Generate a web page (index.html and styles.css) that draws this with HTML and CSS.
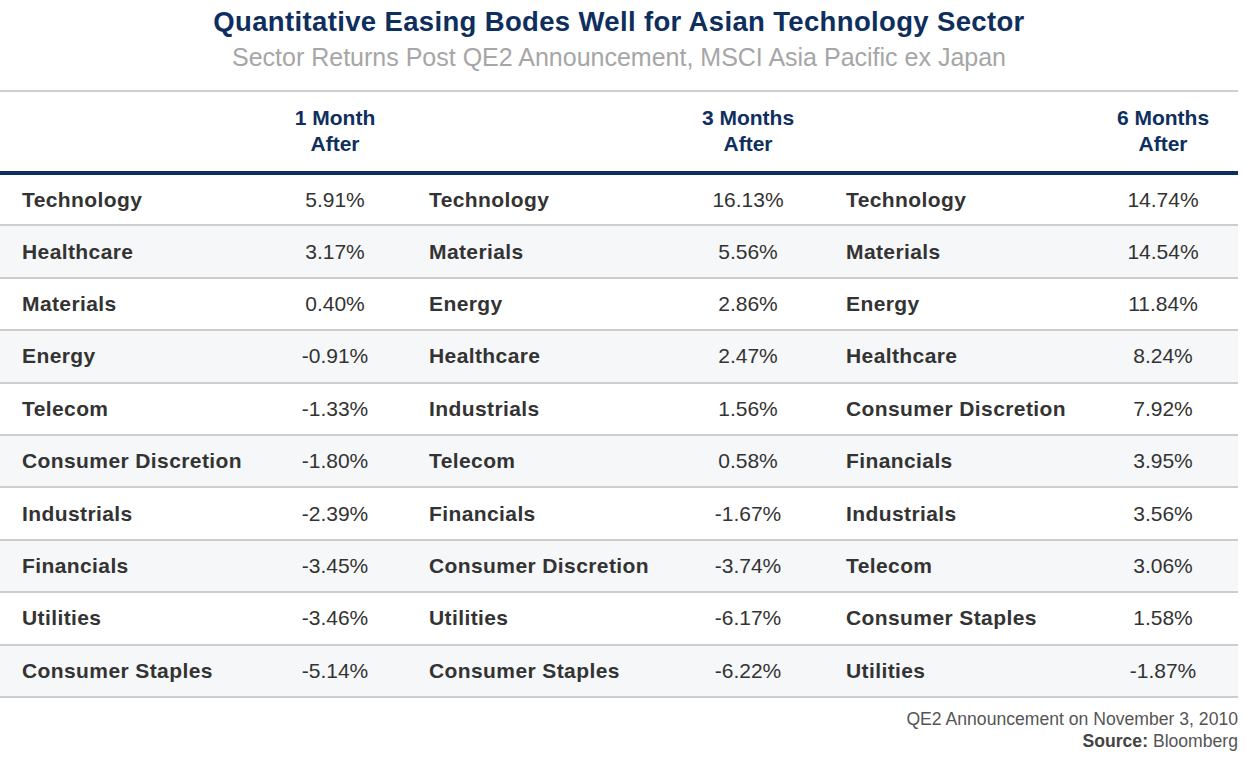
FILE: index.html
```html
<!DOCTYPE html>
<html>
<head>
<meta charset="utf-8">
<link rel="stylesheet" href="styles.css">
</head>
<body>
<div class="page">
  <header class="titles">
    <h1 class="title">Quantitative Easing Bodes Well for Asian Technology Sector</h1>
    <p class="subtitle">Sector Returns Post QE2 Announcement, MSCI Asia Pacific ex Japan</p>
  </header>
  <table class="returns">
    <colgroup>
      <col class="c-l1"><col class="c-v1"><col class="c-l2"><col class="c-v2"><col class="c-l3"><col class="c-v3">
    </colgroup>
    <thead>
      <tr>
        <th></th><th class="val">1 Month<br>After</th>
        <th></th><th class="val">3 Months<br>After</th>
        <th></th><th class="val">6 Months<br>After</th>
      </tr>
    </thead>
    <tbody>
      <tr><td class="lab">Technology</td><td class="val">5.91%</td><td class="lab">Technology</td><td class="val">16.13%</td><td class="lab">Technology</td><td class="val">14.74%</td></tr>
      <tr><td class="lab">Healthcare</td><td class="val">3.17%</td><td class="lab">Materials</td><td class="val">5.56%</td><td class="lab">Materials</td><td class="val">14.54%</td></tr>
      <tr><td class="lab">Materials</td><td class="val">0.40%</td><td class="lab">Energy</td><td class="val">2.86%</td><td class="lab">Energy</td><td class="val">11.84%</td></tr>
      <tr><td class="lab">Energy</td><td class="val">-0.91%</td><td class="lab">Healthcare</td><td class="val">2.47%</td><td class="lab">Healthcare</td><td class="val">8.24%</td></tr>
      <tr><td class="lab">Telecom</td><td class="val">-1.33%</td><td class="lab">Industrials</td><td class="val">1.56%</td><td class="lab">Consumer Discretion</td><td class="val">7.92%</td></tr>
      <tr><td class="lab">Consumer Discretion</td><td class="val">-1.80%</td><td class="lab">Telecom</td><td class="val">0.58%</td><td class="lab">Financials</td><td class="val">3.95%</td></tr>
      <tr><td class="lab">Industrials</td><td class="val">-2.39%</td><td class="lab">Financials</td><td class="val">-1.67%</td><td class="lab">Industrials</td><td class="val">3.56%</td></tr>
      <tr><td class="lab">Financials</td><td class="val">-3.45%</td><td class="lab">Consumer Discretion</td><td class="val">-3.74%</td><td class="lab">Telecom</td><td class="val">3.06%</td></tr>
      <tr><td class="lab">Utilities</td><td class="val">-3.46%</td><td class="lab">Utilities</td><td class="val">-6.17%</td><td class="lab">Consumer Staples</td><td class="val">1.58%</td></tr>
      <tr><td class="lab">Consumer Staples</td><td class="val">-5.14%</td><td class="lab">Consumer Staples</td><td class="val">-6.22%</td><td class="lab">Utilities</td><td class="val">-1.87%</td></tr>
    </tbody>
  </table>
  <footer class="notes">
    <p>QE2 Announcement on November 3, 2010</p>
    <p><b>Source:</b> Bloomberg</p>
  </footer>
</div>
</body>
</html>
```
FILE: styles.css
```css
html, body {
  margin: 0;
  padding: 0;
  background: #ffffff;
}
.page {
  width: 1238px;
  font-family: "Liberation Sans", Arial, sans-serif;
}
.titles {
  text-align: center;
}
.title {
  margin: 0;
  padding-top: 5px;
  font-size: 27.5px;
  line-height: 34px;
  font-weight: bold;
  color: #0e2e5e;
  letter-spacing: 0.35px;
}
.subtitle {
  margin: 3px 0 0 0;
  font-size: 25px;
  line-height: 30px;
  color: #a6a6a6;
  padding-bottom: 18px;
}
.returns {
  width: 1238px;
  table-layout: fixed;
  border-collapse: collapse;
  border-top: 2px solid #cfcfcf;
}
.c-l1 { width: 263px; }
.c-v1 { width: 144px; }
.c-l2 { width: 265px; }
.c-v2 { width: 152px; }
.c-l3 { width: 264px; }
.c-v3 { width: 150px; }
.returns thead th {
  padding: 13px 0 14px 0;
  font-size: 21px;
  line-height: 26px;
  font-weight: bold;
  color: #0f2f5e;
  border-bottom: 4px solid #0c2f5f;
}
.returns tbody tr {
  height: 52.4px;
}
.returns tbody tr:nth-child(even) {
  background: #f6f7f9;
}
.returns tbody td {
  border-bottom: 2px solid #cdcdcd;
  padding: 0;
  vertical-align: middle;
  font-size: 21px;
  color: #333333;
}
.returns td.lab {
  padding-left: 22px;
  font-weight: bold;
  letter-spacing: 0.4px;
  white-space: nowrap;
}
.val {
  text-align: center;
}
.notes {
  text-align: right;
  padding-top: 10px;
  font-size: 17.6px;
  line-height: 22px;
  color: #555555;
}
.notes p {
  margin: 0;
}
.notes b {
  color: #444444;
}
```
